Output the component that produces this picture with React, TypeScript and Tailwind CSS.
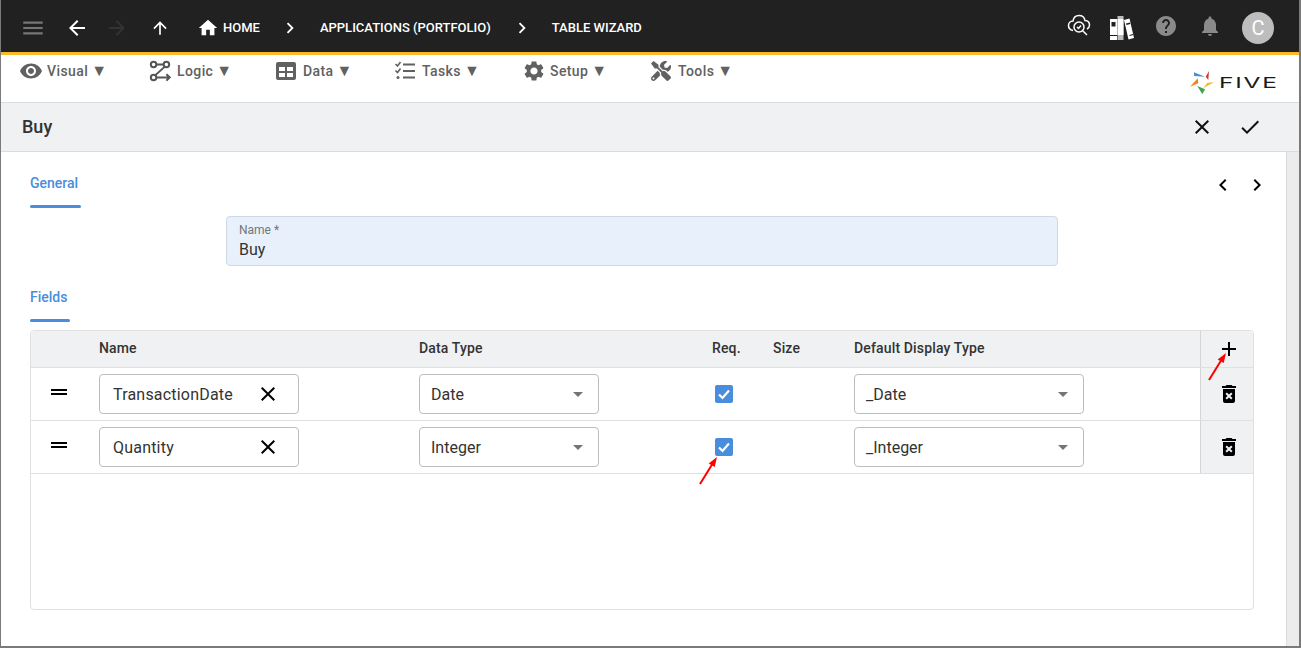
import { MdMenu, MdArrowBack, MdArrowForward, MdArrowUpward, MdHome, MdChevronRight, MdChevronLeft, MdVisibility, MdHelp, MdNotifications, MdClose, MdCheck, MdDragHandle, MdAdd, MdDeleteForever, MdSettings, MdArrowDropDown } from 'react-icons/md'
import { FaTools } from 'react-icons/fa'

const font = { fontFamily: 'Roboto, sans-serif' }

function LogicIcon() {
  return (
    <svg viewBox="0 0 24 24" className="w-[22px] h-[22px]" fill="none" stroke="#555" strokeWidth="2.200">
      <circle cx="5" cy="5" r="3" />
      <circle cx="19" cy="5" r="3" />
      <circle cx="5" cy="19" r="3" />
      <path d="M8 5h8M17 7.500L7 16.500M8 19h14M19 15.500l3.500 3.500-3.500 3.500" />
    </svg>
  )
}

function DataIcon() {
  return (
    <svg viewBox="0 0 20 18" className="w-[20px] h-[18px] ml-px">
      <path fill="#616161" fillRule="evenodd" d="M2 0h16a2 2 0 0 1 2 2v14a2 2 0 0 1-2 2H2a2 2 0 0 1-2-2V2a2 2 0 0 1 2-2zM3 5v4h6V5H3zm8 0v4h6V5h-6zM3 11v4h6v-4H3zm8 0v4h6v-4h-6z" />
    </svg>
  )
}

function TasksIcon() {
  return (
    <svg viewBox="0 0 22 22" className="w-[22px] h-[22px]" fill="none" stroke="#616161" strokeWidth="2.200">
      <path d="M9 4.500h12M9 11h12M9 17.500h12" />
      <path strokeWidth="1.600" d="M1.500 4l2 2 3-4M1.500 10.500l2 2 3-4" />
      <circle cx="4" cy="17.500" r="1.500" fill="#616161" stroke="none" />
    </svg>
  )
}

function CloudIcon() {
  return (
    <svg viewBox="0 0 24 24" className="w-[24px] h-[24px]" fill="none" stroke="white" strokeWidth="1.500">
      <path d="M6 17.500C3.500 17 1.500 15 1.500 12.500 1.500 10 3.500 8 6 8 6.500 4.500 9 2.500 12 2.500c3 0 5.500 2 6 5 2.500.2 4.500 2 4.500 4.500 0 1.800-1 3.200-2.500 4" />
      <circle cx="12" cy="14" r="5" />
      <path d="M15.700 17.700L20 22M10 14l1.500 1.500 2.500-3" />
    </svg>
  )
}

function BooksIcon() {
  return (
    <svg viewBox="0 0 24 24" className="w-[24px] h-[24px]">
      <path fill="white" fillRule="evenodd" d="M0 3h7v21H0V3zm1.500 3v4.500h4V6h-4z" />
      <path fill="#1f1f1f" d="M0 19h7v1H0z" />
      <path fill="#bdbdbd" d="M7.500 0h6v24h-6z" />
      <path fill="white" d="M7.500 3h6v16h-6z" />
      <path fill="white" fillRule="evenodd" d="M14 4l5.500-1.500L24 22l-5.500 1.500L14 4z" />
      <path fill="#1f1f1f" d="M16 7.500l4-1 .4 1.500-4 1zM19.500 19l3.500-.9.2 1-3.500.9z" />
    </svg>
  )
}

function FiveLogo() {
  return (
    <div className="flex items-center">
      <svg viewBox="0 0 24 24" className="w-[24px] h-[24px]">
        <polygon points="4,1.300 15,5.700 4,5" fill="#4a8ddc" />
        <polygon points="19,0 15.700,5.700 18.300,9" fill="#d9362b" />
        <polygon points="24,11.300 13.300,17.300 17.300,11.700" fill="#fbb829" />
        <polygon points="12.300,23.300 7.300,15 15,18.300" fill="#3fa650" />
        <polygon points="0,15.700 7.700,7.300 8.300,12.300" fill="#f58220" />
      </svg>
      <div className="w-[63px] pl-[5px]">
        <span className="block origin-left scale-x-[1.75] text-[#1a1a1a] text-[14px] leading-none tracking-[1px] font-normal" style={{ fontFamily: 'Inter, sans-serif' }}>FIVE</span>
      </div>
    </div>
  )
}

function MenuItem({ icon, label, width }: { icon: React.ReactNode; label: string; width: string }) {
  return (
    <div className={`flex items-center ${width}`}>
      <div className="w-[28px] flex items-center">{icon}</div>
      <span className="text-[14px] font-medium text-[#616161] tracking-[0.4px]">{label}</span>
      <span className="ml-[3px] text-[16px] leading-none text-[#616161]">▼</span>
    </div>
  )
}

function TextInput({ value }: { value: string }) {
  return (
    <div className="w-[200px] h-[40px] flex items-center justify-between pl-[13px] pr-[18px] border border-[#bdbdbd] rounded-[4px] bg-white">
      <span className="text-[16px] text-[#333] tracking-[0.2px] pt-[1px]">{value}</span>
      <MdClose className="w-[24px] h-[24px] text-black" />
    </div>
  )
}

function SelectInput({ value, width }: { value: string; width: string }) {
  return (
    <div className={`${width} h-[40px] flex items-center justify-between pl-[11px] pr-[8px] border border-[#bdbdbd] rounded-[4px] bg-white`}>
      <span className="text-[16px] text-[#333] pt-[1px]">{value}</span>
      <MdArrowDropDown className="w-[24px] h-[24px] text-[#757575]" />
    </div>
  )
}

function Row({ name, type, display }: { name: string; type: string; display: string }) {
  return (
    <div className="flex h-[53px] border-b border-[#e0e0e0]">
      <div className="w-[58px] flex justify-center pt-[12px]">
        <MdDragHandle className="w-[24px] h-[24px] text-black -ml-[2px]" />
      </div>
      <div className="w-[10px]" />
      <div className="w-[320px] flex items-center"><TextInput value={name} /></div>
      <div className="w-[296px] flex items-center"><SelectInput value={type} width="w-[180px]" /></div>
      <div className="w-[58px] flex items-center">
        <div className="w-[18px] h-[18px] rounded-[2px] bg-[#4a8ddc] flex items-center justify-center">
          <svg viewBox="0 0 18 18" className="w-[18px] h-[18px]" fill="none" stroke="white" strokeWidth="2.200">
            <path d="M4 9.500l3.500 3.500L14 5.500" />
          </svg>
        </div>
      </div>
      <div className="w-[81px]" />
      <div className="w-[346px] flex items-center"><SelectInput value={display} width="w-[230px]" /></div>
      <div className="flex-1 bg-[#f0f1f3] border-l border-[#d6d6d6] flex items-center justify-center pl-[4px]">
        <MdDeleteForever className="w-[24px] h-[24px] text-black" />
      </div>
    </div>
  )
}

function Arrow({ className }: { className: string }) {
  return (
    <svg viewBox="0 0 20 30" className={`absolute w-[20px] h-[30px] ${className}`}>
      <path d="M1 29L14 8" stroke="#ff0000" strokeWidth="2" fill="none" />
      <polygon points="18,2 15.700,12 9.700,8.500" fill="#ff0000" />
    </svg>
  )
}

export default function App() {
  return (
    <div className="relative w-[1301px] h-[648px] overflow-hidden bg-white flex flex-col border-l border-r-2 border-b-2 border-[#7a7a7a]" style={font}>
      {/* Top bar */}
      <div className="h-[55px] shrink-0 bg-[#212121] border-b-[3px] border-[#fbb829] pt-[4px] flex items-center text-white">
        <MdMenu className="w-[26px] h-[26px] ml-[19px] text-[#757575]" />
        <MdArrowBack className="w-[24px] h-[24px] ml-[19px]" />
        <MdArrowForward className="w-[24px] h-[24px] ml-[16px] text-[#333]" />
        <MdArrowUpward className="w-[20px] h-[20px] ml-[21px]" />
        <MdHome className="w-[22px] h-[22px] ml-[27px]" />
        <span className="ml-[4px] text-[13px] font-medium">HOME</span>
        <MdChevronRight className="w-[22px] h-[22px] ml-[19px]" />
        <span className="ml-[19px] text-[13px] font-medium">APPLICATIONS (PORTFOLIO)</span>
        <MdChevronRight className="w-[22px] h-[22px] ml-[20px]" />
        <span className="ml-[19px] text-[13px] font-medium">TABLE WIZARD</span>
        <div className="ml-auto flex items-center">
          <div className="-mt-[7px]"><CloudIcon /></div>
          <div className="ml-[19px]"><BooksIcon /></div>
          <MdHelp className="w-[24px] h-[24px] ml-[20px] -mt-[4px] text-[#8a8a8a]" />
          <MdNotifications className="w-[24px] h-[24px] ml-[20px] -mt-[4px] text-[#8a8a8a]" />
          <div className="ml-[20px] mr-[25px] w-[32px] h-[32px] rounded-full bg-[#bdbdbd] flex items-center justify-center text-[20px]">C</div>
        </div>
      </div>

      {/* Menu bar */}
      <div className="h-[48px] shrink-0 border-b border-[#dcdcdc] flex pl-[18px] pr-[22px] justify-between">
        <div className="flex h-[32px] items-center">
          <MenuItem width="w-[130px]" label="Visual" icon={<MdVisibility className="w-[24px] h-[24px] text-[#616161]" />} />
          <MenuItem width="w-[126px]" label="Logic" icon={<LogicIcon />} />
          <MenuItem width="w-[119px]" label="Data" icon={<DataIcon />} />
          <MenuItem width="w-[128px]" label="Tasks" icon={<TasksIcon />} />
          <MenuItem width="w-[128px]" label="Setup" icon={<MdSettings className="w-[24px] h-[24px] text-[#616161]" />} />
          <MenuItem width="w-[100px]" label="Tools" icon={<FaTools className="w-[20px] h-[20px] ml-px text-[#616161]" />} />
        </div>
        <div className="pt-[16px]"><FiveLogo /></div>
      </div>

      {/* Title bar */}
      <div className="h-[49px] shrink-0 bg-[#f0f1f3] border-b border-[#dcdcdc] flex items-center pl-[21px]">
        <span className="text-[18px] font-medium text-[#333] -mt-[2px]">Buy</span>
        <MdClose className="w-[24px] h-[24px] ml-auto text-[#111]" />
        <MdCheck className="w-[24px] h-[24px] ml-[24px] mr-[37px] text-[#111]" />
      </div>

      {/* Form */}
      <div className="relative flex-1 flex min-h-0">
        <div className="flex-1 pl-[29px] pr-[32px]">
          <div className="flex justify-between">
            <div className="w-[51px] pt-[23px]">
              <div className="text-[14px] leading-[16px] font-medium text-[#4a8ddc] h-[30px]">General</div>
              <div className="h-[3px] rounded-[2px] bg-[#4a8ddc]" />
            </div>
            <div className="flex pt-[21px] -mr-[15px]">
              <MdChevronLeft className="w-[24px] h-[24px] text-black" />
              <MdChevronRight className="w-[24px] h-[24px] ml-[10px] text-black" />
            </div>
          </div>
          <div className="mt-[8px] ml-[196px] w-[832px] h-[50px] bg-[#e8f1fb] border border-[#cdd9e6] rounded-[4px] pl-[12px] pt-[6px]">
            <div className="text-[12px] leading-[14px] text-[#757575]">Name *</div>
            <div className="text-[16px] leading-[24px] pt-[1px] text-[#333]">Buy</div>
          </div>
          <div className="w-[40px] mt-[23px]">
            <div className="text-[14px] leading-[16px] font-medium text-[#4a8ddc] h-[30px]">Fields</div>
            <div className="h-[3px] rounded-[2px] bg-[#4a8ddc]" />
          </div>
          <div className="mt-[8px] w-[1224px] h-[280px] border border-[#e0e0e0] rounded-[4px] overflow-hidden">
            <div className="flex h-[37px] bg-[#f0f1f3] border-b border-[#e0e0e0] text-[14px] font-medium text-[#333] tracking-[0.15px]">
              <div className="w-[68px]" />
              <div className="w-[320px] flex items-center pb-[2px]">Name</div>
              <div className="w-[293px] flex items-center pb-[2px]">Data Type</div>
              <div className="w-[61px] flex items-center pb-[2px]">Req.</div>
              <div className="w-[81px] flex items-center pb-[2px]">Size</div>
              <div className="w-[346px] flex items-center pb-[2px]">Default Display Type</div>
              <div className="flex-1 border-l border-[#d6d6d6] flex items-center justify-center pl-[4px]">
                <MdAdd className="w-[24px] h-[24px] text-black" />
              </div>
            </div>
            <Row name="TransactionDate" type="Date" display="_Date" />
            <Row name="Quantity" type="Integer" display="_Integer" />
          </div>
        </div>
        {/* Scrollbar */}
        <div className="w-[13px] shrink-0 bg-[#ececec] border-l border-[#dcdcdc]" />
        <Arrow className="left-[1207px] top-[199px]" />
        <Arrow className="left-[698px] top-[303px]" />
      </div>
    </div>
  )
}
